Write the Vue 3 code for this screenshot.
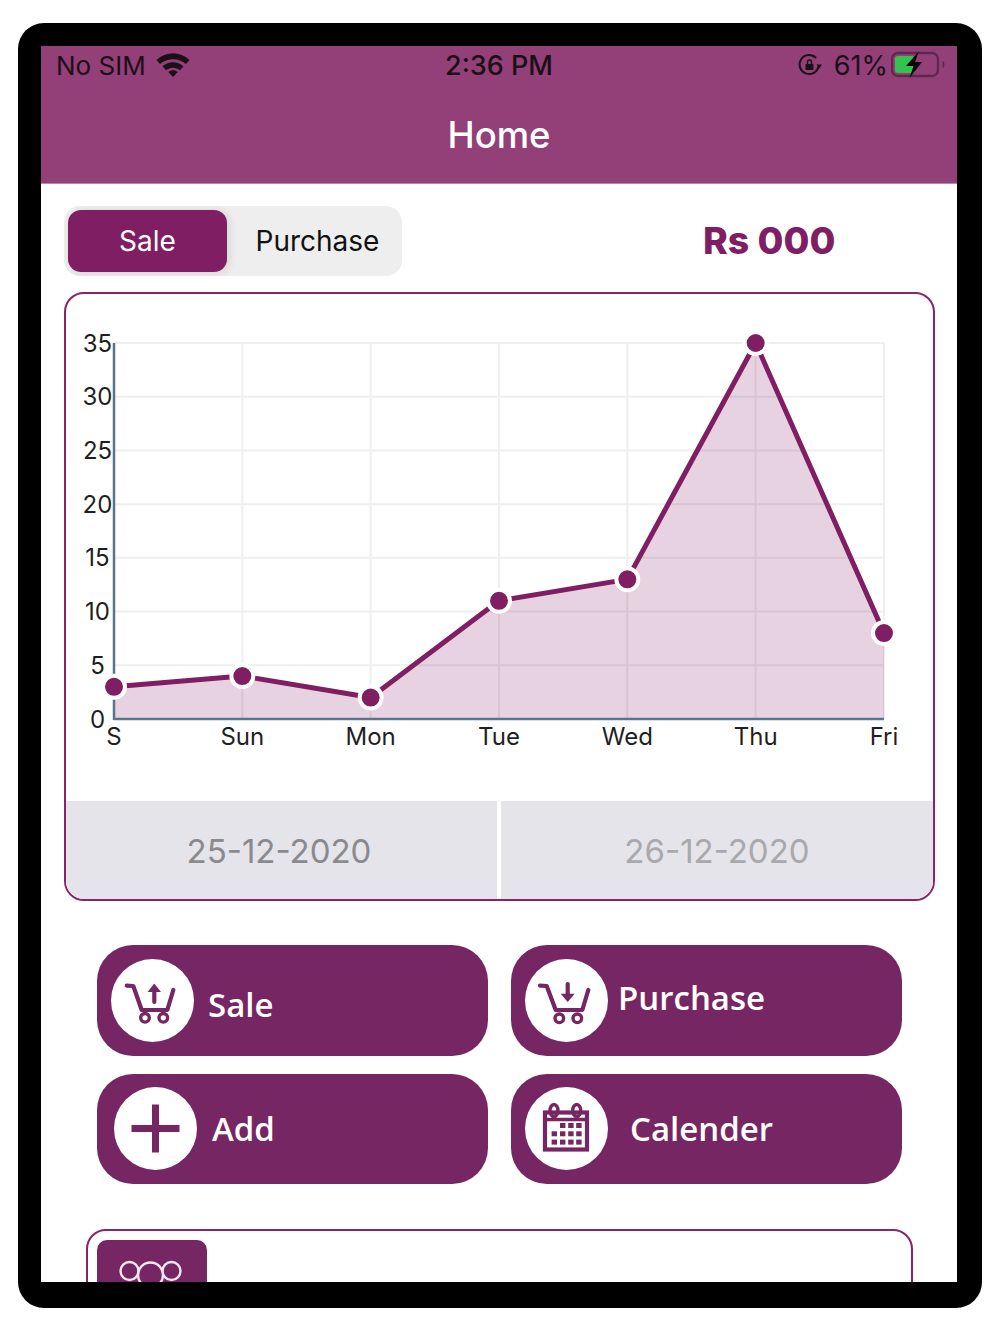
<script setup>
const days = ['S', 'Sun', 'Mon', 'Tue', 'Wed', 'Thu', 'Fri']
const values = [3, 4, 2, 11, 13, 35, 8]
const ticks = [0, 5, 10, 15, 20, 25, 30, 35]

const left = 114
const stepX = (884 - 114) / 6
const baseY = 719
const unitY = (719 - 343) / 35

const xAt = i => left + i * stepX
const yAt = v => baseY - v * unitY

const points = values.map((v, i) => ({ x: xAt(i), y: yAt(v) }))
const linePoints = points.map(p => `${p.x},${p.y}`).join(' ')
const areaPoints = `${left},${baseY} ${linePoints} ${xAt(6)},${baseY}`
</script>

<template>
  <div class="page">
    <div class="frame">
      <div class="screen">
        <header class="header">
          <div class="status">
            <div class="status-left">
              <span>No SIM</span>
              <svg class="wifi" width="34" height="26" viewBox="0 0 34 26">
                <path d="M0.5 9C10 0 24 0 33.5 9L30 13C22.5 6.5 11.5 6.5 4 13Z" fill="#1c1018" />
                <path d="M6.5 15.2C12.8 10 21.2 10 27.5 15.2L24 19.2C19.8 15.8 14.2 15.8 10 19.2Z" fill="#1c1018" />
                <path d="M12.2 21C15.2 18.8 18.8 18.8 21.8 21L17 26Z" fill="#1c1018" />
              </svg>
            </div>
            <span class="time">2:36 PM</span>
            <div class="status-right">
              <svg class="lock" width="26" height="26" viewBox="0 0 26 26">
                <path d="M21.5 14A9.5 9.5 0 1 1 19 6" fill="none" stroke="#1c1018" stroke-width="2" />
                <path d="M19.5 12.5H25L22.3 16.5Z" fill="#1c1018" />
                <rect x="8.5" y="12" width="8" height="6" rx="1" fill="#1c1018" />
                <path d="M10.5 12.5V10a2 2 0 0 1 4 0V12.5" fill="none" stroke="#1c1018" stroke-width="1.5" />
              </svg>
              <span class="percent">61%</span>
              <svg class="battery" width="54" height="28" viewBox="0 0 54 28">
                <rect x="1" y="2" width="46" height="23" rx="6" fill="none" stroke="#61284f" stroke-width="2.4" />
                <rect x="4" y="5" width="20" height="17" rx="3" fill="#34c24f" />
                <path d="M52 10.5C53.2 11.5 53.2 15.5 52 16.5Z" fill="#61284f" stroke="#61284f" />
                <path d="M28 0L15 15H22.5L18.5 27L31 11H24Z" fill="#0c070b" />
              </svg>
            </div>
          </div>
          <h1 class="title">Home</h1>
        </header>

        <main class="content">
          <div class="toolbar">
            <div class="segment">
              <div class="segment-item active">Sale</div>
              <div class="segment-item">Purchase</div>
            </div>
            <div class="amount">Rs 000</div>
          </div>

          <section class="chart-card">
            <svg class="chart" width="867" height="507" viewBox="66 294 867 507">
              <line v-for="t in ticks" :key="'h' + t" :x1="left" :x2="884" :y1="yAt(t)" :y2="yAt(t)" class="grid" />
              <line v-for="(d, i) in days" :key="'v' + d" :x1="xAt(i)" :x2="xAt(i)" y1="343" :y2="baseY" class="grid" />
              <polygon :points="areaPoints" class="area" />
              <line :x1="left" :x2="left" y1="343" :y2="baseY + 1" class="axis" />
              <line :x1="left" x2="884" :y1="baseY" :y2="baseY" class="axis" />
              <polyline :points="linePoints" class="line" />
              <circle v-for="p in points" :key="p.x" :cx="p.x" :cy="p.y" r="11" class="dot" />
              <text v-for="t in ticks" :key="'y' + t" x="97.5" :y="yAt(t) + 8.5" class="tick">{{ t }}</text>
              <text v-for="(d, i) in days" :key="'x' + d" :x="xAt(i)" y="744.5" class="tick">{{ d }}</text>
            </svg>
            <div class="dates">
              <div class="date">25-12-2020</div>
              <div class="date muted">26-12-2020</div>
            </div>
          </section>

          <div class="actions">
            <button class="action action-sale">
              <span class="action-icon">
                <svg width="83" height="83" viewBox="0 0 83 83">
                  <path d="M15.7 26.7L22.3 27L30.7 51H56.3L62.3 31" class="icon-stroke" />
                  <circle cx="34" cy="58.8" r="4.3" class="icon-stroke thin" />
                  <circle cx="52.3" cy="58.8" r="4.3" class="icon-stroke thin" />
                  <path d="M43.3 31V43" class="icon-stroke" />
                  <path d="M43.3 24.5L50 33H36.6Z" class="icon-fill" />
                </svg>
              </span>
              <span class="action-label">Sale</span>
            </button>
            <button class="action action-purchase">
              <span class="action-icon">
                <svg width="83" height="83" viewBox="0 0 83 83">
                  <path d="M15 26.7L21.7 27L30.7 51H57.3L63.3 31" class="icon-stroke" />
                  <circle cx="34.3" cy="59.3" r="4.3" class="icon-stroke thin" />
                  <circle cx="52.3" cy="59.3" r="4.3" class="icon-stroke thin" />
                  <path d="M42.7 25V36" class="icon-stroke" />
                  <path d="M42.7 43L35.7 34.8H49.7Z" class="icon-fill" />
                </svg>
              </span>
              <span class="action-label">Purchase</span>
            </button>
            <button class="action action-add">
              <span class="action-icon">
                <svg width="83" height="83" viewBox="0 0 83 83">
                  <path d="M38 17.5H45V38H65.5V45H45V65.5H38V45H17.5V38H38Z" class="icon-fill" />
                </svg>
              </span>
              <span class="action-label">Add</span>
            </button>
            <button class="action action-calendar">
              <span class="action-icon">
                <svg width="83" height="83" viewBox="0 0 83 83">
                  <rect x="20" y="25.5" width="42" height="37" class="icon-stroke square" />
                  <path d="M20 32.5H62" class="icon-stroke square thin" />
                  <ellipse cx="29" cy="23.5" rx="4" ry="6" fill="#fff" class="icon-stroke thin" />
                  <ellipse cx="51.7" cy="23.5" rx="4" ry="6" fill="#fff" class="icon-stroke thin" />
                  <template v-for="(y, r) in [36, 44.3, 52.6]" :key="y">
                    <template v-for="(x, c) in [26.6, 35, 43.2, 51.2]" :key="x">
                      <rect v-if="r > 0 || c > 0" :x="x" :y="y" width="5.4" height="5" class="icon-fill" />
                    </template>
                  </template>
                </svg>
              </span>
              <span class="action-label">Calender</span>
            </button>
          </div>

          <section class="list-card">
            <div class="list-tile">
              <svg width="110" height="42" viewBox="0 0 110 42">
                <circle cx="32.5" cy="31" r="9" class="tile-ring" />
                <circle cx="53.5" cy="35" r="12.5" class="tile-ring" />
                <circle cx="74.5" cy="31" r="9" class="tile-ring" />
              </svg>
            </div>
          </section>
        </main>
      </div>
    </div>
  </div>
</template>

<style scoped>
.page {
  padding: 23px 18px 0;
  font-family: Inter, "Liberation Sans", sans-serif;
}

.frame {
  height: 1285px;
  box-sizing: border-box;
  padding: 23px 25px 26px 23px;
  background: #000;
  border-radius: 26px;
}

.screen {
  height: 100%;
  overflow: hidden;
  background: #fff;
}

.header {
  height: 138px;
  box-sizing: border-box;
  background: #933f78;
  border-bottom: 1px solid #b58aa8;
}

.status {
  display: grid;
  grid-template-columns: 1fr auto 1fr;
  align-items: center;
  height: 38px;
  padding: 0 15px;
  color: #1c1018;
  font-size: 26px;
}

.status-left {
  display: flex;
  align-items: center;
  gap: 10px;
}

.wifi {
  margin-top: -3px;
}

.time {
  font-size: 27px;
  font-weight: 500;
}

.status-right {
  display: flex;
  align-items: center;
  justify-content: flex-end;
}

.percent {
  margin: 0 3px 0 11px;
  font-size: 27px;
}

.battery {
  margin: 0 -3px 0 0;
}

.title {
  margin: 12px 0 0;
  color: #fff;
  font-size: 36.5px;
  font-weight: 500;
  line-height: 78px;
  text-align: center;
}

.content {
  padding: 22px 22px 0 23px;
}

.toolbar {
  display: flex;
  align-items: center;
}

.segment {
  display: flex;
  align-items: center;
  width: 338px;
  height: 70px;
  box-sizing: border-box;
  padding: 4px;
  background: #eeeeef;
  border-radius: 16px;
}

.segment-item {
  flex: 1;
  text-align: center;
  font-size: 28px;
  color: #111;
  padding-left: 10px;
}

.segment-item.active {
  flex: none;
  width: 159px;
  height: 62px;
  padding-left: 0;
  line-height: 62px;
  color: #fff;
  background: #801e63;
  border-radius: 13px;
  box-shadow: 2px 1px 8px rgba(0, 0, 0, 0.12);
}

.amount {
  margin: -2px 0 0 301px;
  color: #801e63;
  font-size: 37.5px;
  font-weight: 800;
  white-space: nowrap;
}

.chart-card {
  width: 871px;
  height: 609px;
  box-sizing: border-box;
  margin-top: 16px;
  overflow: hidden;
  border: 2px solid #8a2468;
  border-radius: 20px;
}

.chart {
  display: block;
}

.grid {
  stroke: #efeef0;
  stroke-width: 2;
}

.area {
  fill: #801e63;
  fill-opacity: 0.2;
}

.axis {
  stroke: #5c7488;
  stroke-width: 2.5;
}

.line {
  fill: none;
  stroke: #801e63;
  stroke-width: 5;
  stroke-linejoin: round;
}

.dot {
  fill: #801e63;
  stroke: #fff;
  stroke-width: 4;
}

.tick {
  fill: #1f1f1f;
  font-size: 24px;
  text-anchor: middle;
}

.dates {
  display: grid;
  grid-template-columns: 431px 432px;
  gap: 4px;
  height: 98px;
}

.date {
  padding-right: 5px;
  background: #e5e4ea;
  color: #8a8a8e;
  font-size: 33px;
  line-height: 100px;
  text-align: center;
}

.date.muted {
  color: #a9a9ad;
  padding-right: 0;
}

.actions {
  display: grid;
  grid-template-columns: 391px 391px;
  grid-auto-rows: 110.5px;
  gap: 18px 23px;
  margin: 44px 0 0 33px;
}

.action {
  display: flex;
  align-items: center;
  padding: 0 0 0 14px;
  color: #fff;
  background: #762663;
  border: none;
  border-radius: 36px;
  font-family: "Open Sans", "Liberation Sans", sans-serif;
  font-size: 33px;
  font-weight: 600;
}

.action-icon {
  display: flex;
  flex: none;
  width: 83px;
  height: 83px;
  background: #fff;
  border-radius: 50%;
}

.action-label {
  margin-left: 14px;
}

.action-sale .action-label {
  margin-top: 8px;
}

.action-purchase .action-label {
  margin-left: 10px;
  margin-top: -5px;
}

.action-add {
  padding-left: 17px;
}

.action-add .action-label {
  margin-left: 15px;
}

.action-calendar .action-label {
  margin-left: 22px;
}

.icon-stroke {
  fill: none;
  stroke: #762663;
  stroke-width: 4.2;
  stroke-linejoin: round;
  stroke-linecap: round;
}

.icon-stroke.thin {
  stroke-width: 3.4;
}

.icon-stroke.square {
  stroke-linecap: butt;
  stroke-linejoin: miter;
}

.icon-fill {
  fill: #762663;
}

.list-card {
  width: 827px;
  height: 120px;
  box-sizing: border-box;
  margin: 45px 0 0 22px;
  padding: 9px;
  border: 2px solid #8a2468;
  border-radius: 20px;
}

.list-tile {
  width: 110px;
  height: 90px;
  background: #762663;
  border-radius: 10px;
}

.list-tile svg {
  display: block;
}

.tile-ring {
  fill: none;
  stroke: #f3e6ef;
  stroke-width: 2.4;
}
</style>

<style>
html,
body {
  background: #fff;
}
</style>
